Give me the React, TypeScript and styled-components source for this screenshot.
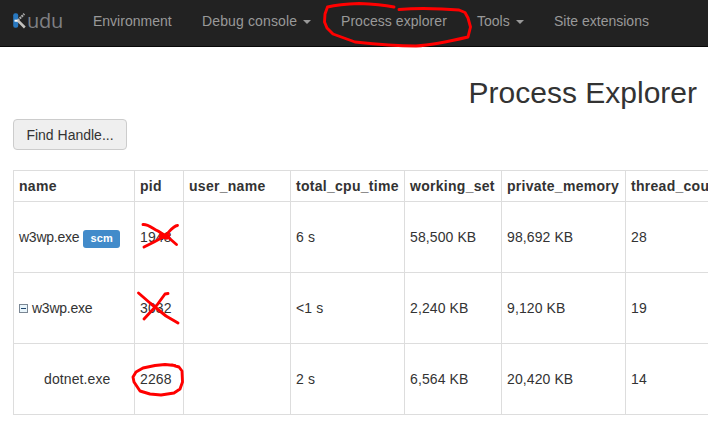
import React from "react";
import styled, { createGlobalStyle } from "styled-components";

const GlobalStyle = createGlobalStyle`
  * { box-sizing: border-box; }
  html, body { margin: 0; overflow: hidden; background: #fff; }
  body {
    font: 14px/20px "Liberation Sans", Arial, sans-serif;
    color: #333;
  }
`;

const Page = styled.div`
  position: relative;
  width: 708px;
  height: 424px;
  overflow: hidden;
`;

const Navbar = styled.nav`
  display: flex;
  align-items: flex-start;
  height: 47px;
  padding-left: 12px;
  background: #222;
  border-bottom: 1px solid #080808;
`;

const Brand = styled.a`
  display: flex;
  width: 66px;
  padding-top: 8px;
  color: #808084;
  font: 20px/26px "Open Sans", "Noto Sans", sans-serif;
  letter-spacing: -0.2px;
`;

const BrandMark = styled.svg`
  flex: none;
  width: 15px;
  height: 18px;
  margin-top: 4px;
`;

const NavItem = styled.a<{ $width: number; $spacing?: number }>`
  flex: none;
  display: flex;
  align-items: center;
  width: ${(p) => p.$width}px;
  padding: 11px 0 15px 15px;
  color: #999;
  letter-spacing: ${(p) => p.$spacing ?? 0}px;
  white-space: nowrap;
`;

const Caret = styled.span`
  margin-left: 6px;
  margin-top: 2px;
  border-top: 4px solid #999;
  border-left: 4px solid transparent;
  border-right: 4px solid transparent;
`;

const Title = styled.h2`
  margin: 26px 11px 0 0;
  text-align: right;
  font-size: 30px;
  line-height: 40px;
  font-weight: 400;
`;

const FindButton = styled.button`
  display: block;
  width: 114px;
  height: 31px;
  margin: 6px 0 20px 13px;
  padding: 0;
  border: 1px solid #ccc;
  border-radius: 4px;
  background: #efefef;
  color: #333;
  font: inherit;
`;

const ProcessTable = styled.table`
  width: 722px;
  margin-left: 13px;
  table-layout: fixed;
  border-collapse: separate;
  border-spacing: 0;
  border-top: 1px solid #ddd;
  border-left: 1px solid #ddd;
`;

const HeadCell = styled.th`
  height: 31px;
  padding: 0 0 0 5px;
  border-right: 1px solid #ddd;
  border-bottom: 1px solid #ddd;
  text-align: left;
  letter-spacing: 0.28px;
  white-space: nowrap;
`;

const Cell = styled.td`
  height: 71px;
  padding: 0 0 0 5px;
  border-right: 1px solid #ddd;
  border-bottom: 1px solid #ddd;
  letter-spacing: 0.1px;
  white-space: nowrap;
`;

const ProcessName = styled.div<{ $depth: number }>`
  display: flex;
  align-items: center;
  padding-left: ${(p) => p.$depth * 25}px;
  letter-spacing: ${(p) => (p.$depth ? 0.1 : -0.25)}px;
`;

const ScmLabel = styled.span`
  width: 37px;
  height: 18px;
  margin: 3px 0 0 4px;
  border-radius: 3px;
  background: #428bca;
  color: #fff;
  font-size: 11px;
  font-weight: 700;
  line-height: 17px;
  letter-spacing: 0.2px;
  text-align: center;
`;

const CollapseIcon = styled.svg`
  width: 9px;
  height: 9px;
  margin-right: 4px;
`;

const Markup = styled.svg`
  position: absolute;
  inset: 0;
  pointer-events: none;
`;

const navItems = [
  { text: "Environment", width: 109, menu: false },
  { text: "Debug console", width: 139, menu: true, spacing: 0.13 },
  { text: "Process explorer", width: 136, menu: false, spacing: 0.05 },
  { text: "Tools", width: 77, menu: true },
  { text: "Site extensions", width: 125, menu: false },
];

const columns = [
  { name: "name", width: 121 },
  { name: "pid", width: 49 },
  { name: "user_name", width: 107 },
  { name: "total_cpu_time", width: 114 },
  { name: "working_set", width: 97 },
  { name: "private_memory", width: 124 },
  { name: "thread_count", width: 109 },
];

const processes = [
  { name: "w3wp.exe", scm: true, parent: false, depth: 0, values: ["1948", "", "6 s", "58,500 KB", "98,692 KB", "28"] },
  { name: "w3wp.exe", scm: false, parent: true, depth: 0, values: ["3032", "", "<1 s", "2,240 KB", "9,120 KB", "19"] },
  { name: "dotnet.exe", scm: false, parent: false, depth: 1, values: ["2268", "", "2 s", "6,564 KB", "20,420 KB", "14"] },
];

export default function App() {
  return (
    <Page>
      <GlobalStyle />
      <Navbar>
        <Brand>
          <BrandMark viewBox="0 0 15 18">
            <rect x="1.2" y="1.3" width="5" height="14.5" rx="2" fill="#2878c0" />
            <path d="M5.8 8.5 12.3 1.8" stroke="#aaa" strokeWidth="2.2" strokeDasharray="2 .7" />
            <path d="M5.3 8 12.8 15.5" stroke="#c3c1bd" strokeWidth="2.5" />
            <path d="M2.5 8.7h3" stroke="#fff" strokeWidth="2" />
          </BrandMark>
          udu
        </Brand>
        {navItems.map((item) => (
          <NavItem key={item.text} $width={item.width} $spacing={item.spacing}>
            {item.text}
            {item.menu && <Caret />}
          </NavItem>
        ))}
      </Navbar>
      <Title>Process Explorer</Title>
      <FindButton>Find Handle...</FindButton>
      <ProcessTable>
        <colgroup>
          {columns.map((c) => (
            <col key={c.name} width={c.width} />
          ))}
        </colgroup>
        <thead>
          <tr>
            {columns.map((c) => (
              <HeadCell key={c.name}>{c.name}</HeadCell>
            ))}
          </tr>
        </thead>
        <tbody>
          {processes.map((p) => (
            <tr key={p.values[0]}>
              <Cell>
                <ProcessName $depth={p.depth}>
                  {p.parent && (
                    <CollapseIcon viewBox="0 0 9 9">
                      <rect x=".5" y=".5" width="8" height="8" fill="#e9f5fb" stroke="#7b8794" />
                      <path d="M2 4.5h5" stroke="#20466e" />
                    </CollapseIcon>
                  )}
                  {p.name}
                  {p.scm && <ScmLabel>scm</ScmLabel>}
                </ProcessName>
              </Cell>
              {p.values.map((v, i) => (
                <Cell key={i}>{v}</Cell>
              ))}
            </tr>
          ))}
        </tbody>
      </ProcessTable>
      <Markup width="708" height="424" fill="none" stroke="#f00" strokeWidth="2.9" strokeLinecap="round" strokeLinejoin="round">
        <path d="M394 7C384 5 374 4 359 3.5C347 4 336 5 327.500 7L325 14L324.500 22L327 28L333 34L344 38L355 42C378 44.500 398 46 416 46C433 45 451 41 468 37L470.500 27L468 18L465 12.500L459 10L442 9C425 8 410 8.500 399 9.500" />
        <path d="M143 224.500C148 224 152 228 158 231L169 238L176.500 244.500M177.500 225.500C173 226 170 231 165 236L154 242L144 247" />
        <path d="M161 234L170 235L167 239L159 237Z" fill="#f00" strokeWidth="1.5" />
        <path d="M138.500 293L150 303L166 316L178 323M168 293.500L165 294L157 305L144 319" />
        <path d="M175 365.500L165 364.500L155 365.500L143 368L136 372L133 377L134 382L140 391L150 394L161 395L174 393L180 389L182.500 382L182 371L179 367L172 365" />
      </Markup>
    </Page>
  );
}
